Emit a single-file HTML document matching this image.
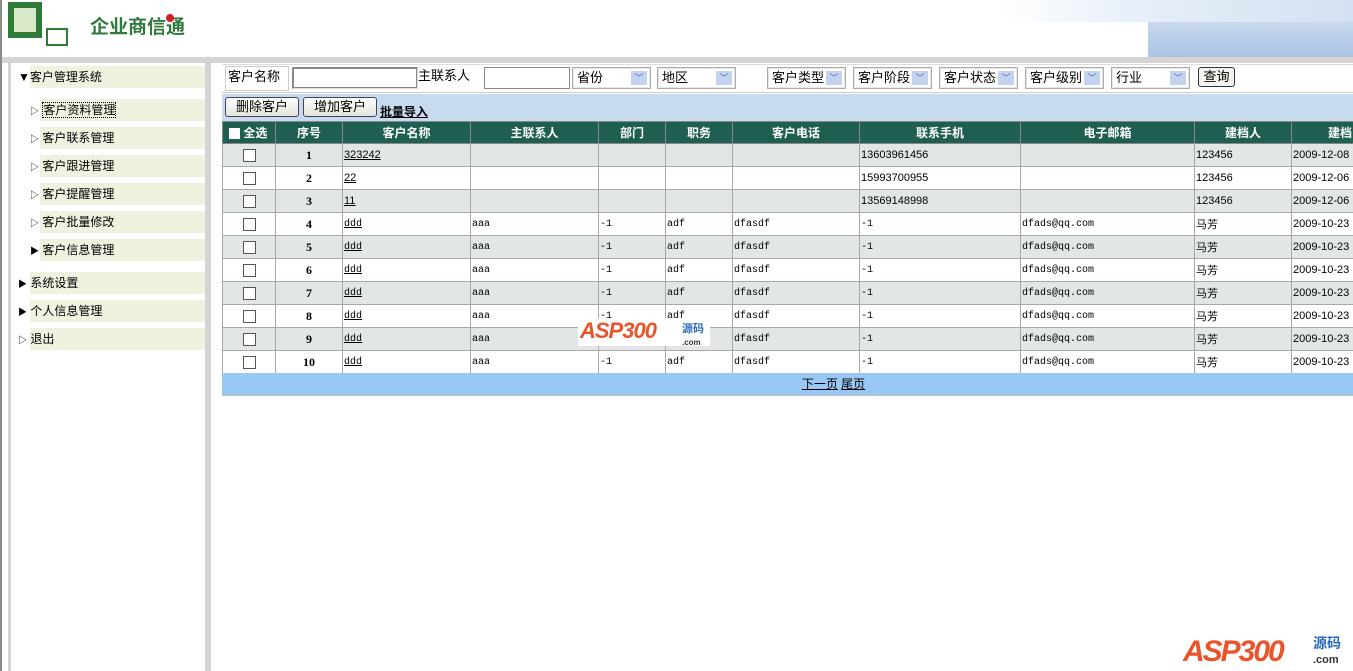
<!DOCTYPE html>
<html><head><meta charset="utf-8"><style>
*{margin:0;padding:0;box-sizing:border-box}
body{width:1353px;height:671px;overflow:hidden;background:#fff;font-family:"Liberation Sans","Noto Sans CJK SC",sans-serif;font-size:12px;color:#000;position:relative}
.a{position:absolute}
.side{background:#eef3e0}
.si{position:absolute;height:22px;line-height:22px;font-size:12px}
.sel{position:absolute;top:67px;height:22px;border:2px solid #e8e8e8;outline:1px solid #aaa;outline-offset:-1px;background:#fff;line-height:17px;padding-left:3px;font-size:13px}
.sel i{position:absolute;right:2px;top:2px;width:16px;height:14px;background:#c3d3f0;color:#4a6aa8;font-style:normal;font-size:9px;text-align:center;line-height:14px}
table{position:absolute;left:222px;top:121px;border-collapse:collapse;table-layout:fixed;width:1149px}
td,th{border:1px solid #a8a8a8;height:23px;font-size:11px;padding:0 1px;white-space:nowrap;overflow:hidden}
th{background:#1f5f52;color:#fff;font-weight:bold;font-size:12px;height:22px;border-color:#888}
tr.g td{background:#e2e6e7}
td.c{text-align:center}
td.n{text-align:center;font-weight:bold;font-family:"Liberation Serif",serif;font-size:12px}
.cb{display:inline-block;width:13px;height:13px;border:1px solid #555;background:#fff;vertical-align:middle}
.m{font-family:"Liberation Mono",monospace;font-size:10px}
u{text-decoration:underline}
.btn{position:absolute;top:97px;height:20px;border:1px solid #445;border-radius:3px;background:linear-gradient(#fff,#e4e4dc);font-size:13px;line-height:18px;text-align:center}
</style></head><body>
<div class="a" style="left:0;top:0;width:2px;height:671px;background:#8a8a8a"></div>
<div class="a" style="left:8px;top:2px;width:34px;height:36px;border:6px solid #2e7a36;background:#d8e8c8"></div>
<div class="a" style="left:46px;top:28px;width:22px;height:18px;border:2px solid #2e7a36;background:#fff"></div>
<div class="a" style="left:90px;top:12px;font-size:19px;font-weight:bold;color:#2f7a3c">企业商信通</div>
<div class="a" style="left:166px;top:14px;width:8px;height:8px;border-radius:50%;background:#d02020"></div>
<div class="a" style="left:1148px;top:22px;width:205px;height:36px;background:linear-gradient(#c9d9ee,#a9c3e4)"></div>
<div class="a" style="left:1000px;top:0;width:353px;height:22px;background:linear-gradient(90deg,#fff,#e6eef8 40%,#d4e1f2)"></div>
<div class="a" style="left:2px;top:57px;width:1351px;height:6px;background:#d4d4d4"></div>
<div class="a" style="left:8px;top:63px;width:3px;height:608px;background:#d4d4d4"></div>
<div class="a" style="left:205px;top:63px;width:6px;height:608px;background:#d4d4d4"></div>
<div class="side a" style="left:30px;top:66px;width:175px;height:22px"></div>
<div class="si" style="left:18px;top:66px">▼客户管理系统</div>
<div class="side a" style="left:40px;top:99px;width:165px;height:22px"></div>
<div class="si" style="left:30px;top:99px"><span style="font-size:9px">▷</span> <span style="border:1px dotted #000">客户资料管理</span></div>
<div class="side a" style="left:40px;top:127px;width:165px;height:22px"></div>
<div class="si" style="left:30px;top:127px"><span style="font-size:9px">▷</span> 客户联系管理</div>
<div class="side a" style="left:40px;top:155px;width:165px;height:22px"></div>
<div class="si" style="left:30px;top:155px"><span style="font-size:9px">▷</span> 客户跟进管理</div>
<div class="side a" style="left:40px;top:183px;width:165px;height:22px"></div>
<div class="si" style="left:30px;top:183px"><span style="font-size:9px">▷</span> 客户提醒管理</div>
<div class="side a" style="left:40px;top:211px;width:165px;height:22px"></div>
<div class="si" style="left:30px;top:211px"><span style="font-size:9px">▷</span> 客户批量修改</div>
<div class="side a" style="left:40px;top:239px;width:165px;height:22px"></div>
<div class="si" style="left:30px;top:239px"><span style="font-size:9px">▶</span> 客户信息管理</div>
<div class="side a" style="left:30px;top:272px;width:175px;height:22px"></div>
<div class="si" style="left:18px;top:272px"><span style="font-size:9px">▶</span> 系统设置</div>
<div class="side a" style="left:30px;top:300px;width:175px;height:22px"></div>
<div class="si" style="left:18px;top:300px"><span style="font-size:9px">▶</span> 个人信息管理</div>
<div class="side a" style="left:30px;top:328px;width:175px;height:22px"></div>
<div class="si" style="left:18px;top:328px"><span style="font-size:9px">▷</span> 退出</div>
<div class="a" style="left:222px;top:64px;width:1131px;height:29px;border-top:1px solid #ddd;border-bottom:1px solid #ccc"></div>
<div class="a" style="left:225px;top:66px;width:64px;height:25px;border:1px solid #ccc;font-size:13px;line-height:20px;padding-left:2px">客户名称</div>
<div class="a" style="left:292px;top:67px;width:126px;height:22px;border:2px inset #ddd;outline:1px solid #888;outline-offset:-2px"></div>
<div class="a" style="left:418px;top:66px;font-size:13px;line-height:20px">主联系人</div>
<div class="a" style="left:484px;top:67px;width:86px;height:22px;border:1px solid #888"></div>
<div class="sel" style="left:572px;width:79px">省份<i>﹀</i></div>
<div class="sel" style="left:657px;width:79px">地区<i>﹀</i></div>
<div class="sel" style="left:767px;width:79px">客户类型<i>﹀</i></div>
<div class="sel" style="left:853px;width:79px">客户阶段<i>﹀</i></div>
<div class="sel" style="left:939px;width:79px">客户状态<i>﹀</i></div>
<div class="sel" style="left:1025px;width:79px">客户级别<i>﹀</i></div>
<div class="sel" style="left:1111px;width:79px">行业<i>﹀</i></div>
<div class="a" style="left:1198px;top:67px;width:37px;height:20px;border:1px solid #333;border-radius:3px;background:#f4f4ee;font-size:13px;text-align:center;line-height:18px">查询</div>
<div class="a" style="left:222px;top:94px;width:1131px;height:27px;background:#c6daf0"></div>
<div class="btn" style="left:225px;width:74px">删除客户</div>
<div class="btn" style="left:303px;width:74px">增加客户</div>
<div class="a" style="left:380px;top:103px;font-size:12px;font-weight:bold"><u>批量导入</u></div>
<table>
<colgroup><col style="width:53px"><col style="width:67px"><col style="width:128px"><col style="width:128px"><col style="width:67px"><col style="width:67px"><col style="width:127px"><col style="width:161px"><col style="width:174px"><col style="width:97px"><col style="width:80px"></colgroup>
<tr><th style="text-align:left;padding-left:6px"><span class="cb" style="width:11px;height:11px;border:none"></span> 全选</th><th>序号</th><th>客户名称</th><th>主联系人</th><th>部门</th><th>职务</th><th>客户电话</th><th>联系手机</th><th>电子邮箱</th><th>建档人</th><th style="text-align:left;padding-left:36px">建档</th></tr>
<tr class="g"><td class="c"><span class="cb"></span></td><td class="n">1</td><td><u>323242</u></td><td></td><td></td><td></td><td></td><td>13603961456</td><td></td><td>123456</td><td>2009-12-08</td></tr>
<tr><td class="c"><span class="cb"></span></td><td class="n">2</td><td><u>22</u></td><td></td><td></td><td></td><td></td><td>15993700955</td><td></td><td>123456</td><td>2009-12-06</td></tr>
<tr class="g"><td class="c"><span class="cb"></span></td><td class="n">3</td><td><u>11</u></td><td></td><td></td><td></td><td></td><td>13569148998</td><td></td><td>123456</td><td>2009-12-06</td></tr>
<tr><td class="c"><span class="cb"></span></td><td class="n">4</td><td class="m"><u>ddd</u></td><td class="m">aaa</td><td class="m">-1</td><td class="m">adf</td><td class="m">dfasdf</td><td class="m">-1</td><td class="m">dfads@qq.com</td><td>马芳</td><td>2009-10-23</td></tr>
<tr class="g"><td class="c"><span class="cb"></span></td><td class="n">5</td><td class="m"><u>ddd</u></td><td class="m">aaa</td><td class="m">-1</td><td class="m">adf</td><td class="m">dfasdf</td><td class="m">-1</td><td class="m">dfads@qq.com</td><td>马芳</td><td>2009-10-23</td></tr>
<tr><td class="c"><span class="cb"></span></td><td class="n">6</td><td class="m"><u>ddd</u></td><td class="m">aaa</td><td class="m">-1</td><td class="m">adf</td><td class="m">dfasdf</td><td class="m">-1</td><td class="m">dfads@qq.com</td><td>马芳</td><td>2009-10-23</td></tr>
<tr class="g"><td class="c"><span class="cb"></span></td><td class="n">7</td><td class="m"><u>ddd</u></td><td class="m">aaa</td><td class="m">-1</td><td class="m">adf</td><td class="m">dfasdf</td><td class="m">-1</td><td class="m">dfads@qq.com</td><td>马芳</td><td>2009-10-23</td></tr>
<tr><td class="c"><span class="cb"></span></td><td class="n">8</td><td class="m"><u>ddd</u></td><td class="m">aaa</td><td class="m">-1</td><td class="m">adf</td><td class="m">dfasdf</td><td class="m">-1</td><td class="m">dfads@qq.com</td><td>马芳</td><td>2009-10-23</td></tr>
<tr class="g"><td class="c"><span class="cb"></span></td><td class="n">9</td><td class="m"><u>ddd</u></td><td class="m">aaa</td><td class="m">-1</td><td class="m">adf</td><td class="m">dfasdf</td><td class="m">-1</td><td class="m">dfads@qq.com</td><td>马芳</td><td>2009-10-23</td></tr>
<tr><td class="c"><span class="cb"></span></td><td class="n">10</td><td class="m"><u>ddd</u></td><td class="m">aaa</td><td class="m">-1</td><td class="m">adf</td><td class="m">dfasdf</td><td class="m">-1</td><td class="m">dfads@qq.com</td><td>马芳</td><td>2009-10-23</td></tr>
</table>
<div class="a" style="left:222px;top:373px;width:1131px;height:23px;background:#99c8f4;border-bottom:1px solid #bbb;text-align:center;line-height:22px;font-size:12px;padding-left:92px"><u>下一页</u> <u>尾页</u></div>
<div class="a" style="left:578px;top:318px;width:132px;height:28px;background:#fff"></div>
<div class="a" style="left:580px;top:318px;font-size:22px;font-weight:bold;font-style:italic;color:#e8552a;letter-spacing:-1px">ASP300</div>
<div class="a" style="left:682px;top:320px;font-size:11px;font-weight:bold;color:#2a6ab8">源码<br><span style="font-size:8px;color:#333">.com</span></div>
<div class="a" style="left:1183px;top:635px;font-size:30px;font-weight:bold;font-style:italic;color:#e8552a;letter-spacing:-2px">ASP300</div>
<div class="a" style="left:1313px;top:636px;font-size:14px;font-weight:bold;color:#2a6ab8;line-height:15px">源码<br><span style="font-size:11px;color:#333">.com</span></div>
</body></html>
